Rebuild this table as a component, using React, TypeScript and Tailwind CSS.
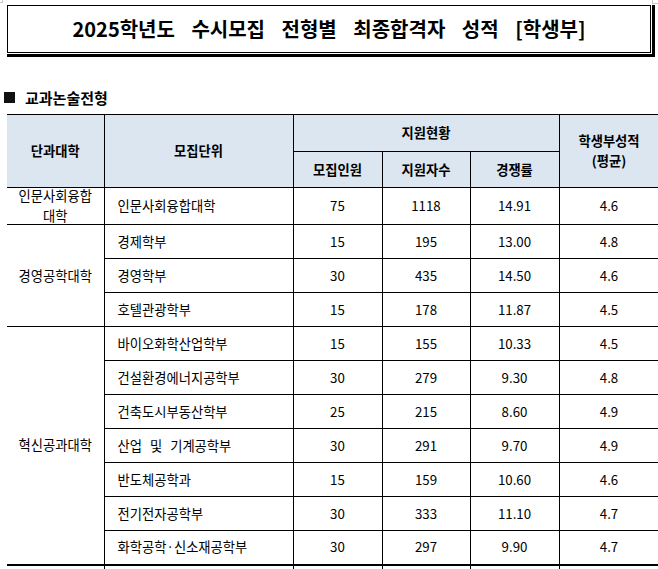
import React from "react";

type Row = { college?: string; span?: number; unit: string; a: string; b: string; c: string; d: string; first?: boolean; ws?: boolean };

const rows: Row[] = [
  { college: "인문사회융합\n대학", span: 1, unit: "인문사회융합대학", a: "75", b: "1118", c: "14.91", d: "4.6", first: true },
  { college: "경영공학대학", span: 3, unit: "경제학부", a: "15", b: "195", c: "13.00", d: "4.8" },
  { unit: "경영학부", a: "30", b: "435", c: "14.50", d: "4.6" },
  { unit: "호텔관광학부", a: "15", b: "178", c: "11.87", d: "4.5" },
  { college: "혁신공과대학", span: 7, unit: "바이오화학산업학부", a: "15", b: "155", c: "10.33", d: "4.5" },
  { unit: "건설환경에너지공학부", a: "30", b: "279", c: "9.30", d: "4.8" },
  { unit: "건축도시부동산학부", a: "25", b: "215", c: "8.60", d: "4.9" },
  { unit: "산업 및 기계공학부", a: "30", b: "291", c: "9.70", d: "4.9", ws: true },
  { unit: "반도체공학과", a: "15", b: "159", c: "10.60", d: "4.6" },
  { unit: "전기전자공학부", a: "30", b: "333", c: "11.10", d: "4.7" },
  { unit: "화학공학·신소재공학부", a: "30", b: "297", c: "9.90", d: "4.7" },
];

const font = { fontFamily: '"Noto Sans CJK KR", "Noto Sans", sans-serif' };

export default function App() {
  const td = "border border-black text-center align-middle p-0";
  return (
    <div className="relative w-[658px] h-[569px] overflow-hidden bg-white text-black" style={font}>
      <div className="absolute left-0 top-0 w-[3px] h-[3px] border-r border-b border-[#c8c8c8]" />
      <div className="absolute right-0 top-0 w-[6px] h-[4px] border-l border-b border-[#c8c8c8]" />
      <div className="ml-[7px] pt-[5px]">
        <div className="w-[648px] pr-[1px] pb-[1px] border-r-[3px] border-b-[3px] border-black">
          <div className="h-[48px] border border-black flex items-center justify-center text-[20px] font-bold leading-none [word-spacing:12px]">
            2025학년도 수시모집 전형별 최종합격자 성적 [학생부]
          </div>
        </div>
      </div>
      <div className="flex items-center h-[22px] mt-[29px] pl-[4px]">
        <div className="w-[11px] h-[11px] bg-[#111]" />
        <div className="ml-[10px] text-[15px] font-bold leading-none">교과논술전형</div>
      </div>
      <table className="ml-[7px] mt-[6px] border-collapse table-fixed text-[13.3px] leading-[20px] [border-left-style:hidden]" style={{ width: 652 }}>
        <colgroup>
          <col style={{ width: 97 }} />
          <col style={{ width: 189 }} />
          <col style={{ width: 89 }} />
          <col style={{ width: 88 }} />
          <col style={{ width: 89 }} />
          <col style={{ width: 100 }} />
        </colgroup>
        <thead>
          <tr className="h-[37px] bg-[#dce6f1] font-bold text-[13.3px]">
            <th rowSpan={2} className={td + " border-l-0"}>단과대학</th>
            <th rowSpan={2} className={td}>모집단위</th>
            <th colSpan={3} className={td}>지원현황</th>
            <th rowSpan={2} className={td}>학생부성적<br />(평균)</th>
          </tr>
          <tr className="h-[36px] bg-[#dce6f1] font-bold text-[13.3px]">
            <th className={td}>모집인원</th>
            <th className={td}>지원자수</th>
            <th className={td}>경쟁률</th>
          </tr>
        </thead>
        <tbody>
          {rows.map((r, i) => (
            <tr key={i} className={r.first ? "h-[37px]" : "h-[34px]"}>
              {r.college && (
                <td rowSpan={r.span} className={td + " border-l-0 whitespace-pre-line"}>
                  <div className={r.first ? "h-[36px] flex flex-col justify-center overflow-visible" : ""}>
                    {r.college}
                  </div>
                </td>
              )}
              <td className={td + " text-left pl-[13px]" + (r.ws ? " [word-spacing:5px]" : "")}>{r.unit}</td>
              <td className={td}>{r.a}</td>
              <td className={td}>{r.b}</td>
              <td className={td}>{r.c}</td>
              <td className={td}>{r.d}</td>
            </tr>
          ))}
          <tr className="h-[34px] border-t-2 border-black">
            <td className={td + " border-l-0"}></td>
            <td className={td}></td>
            <td className={td}></td>
            <td className={td}></td>
            <td className={td}></td>
            <td className={td}></td>
          </tr>
        </tbody>
      </table>
    </div>
  );
}
